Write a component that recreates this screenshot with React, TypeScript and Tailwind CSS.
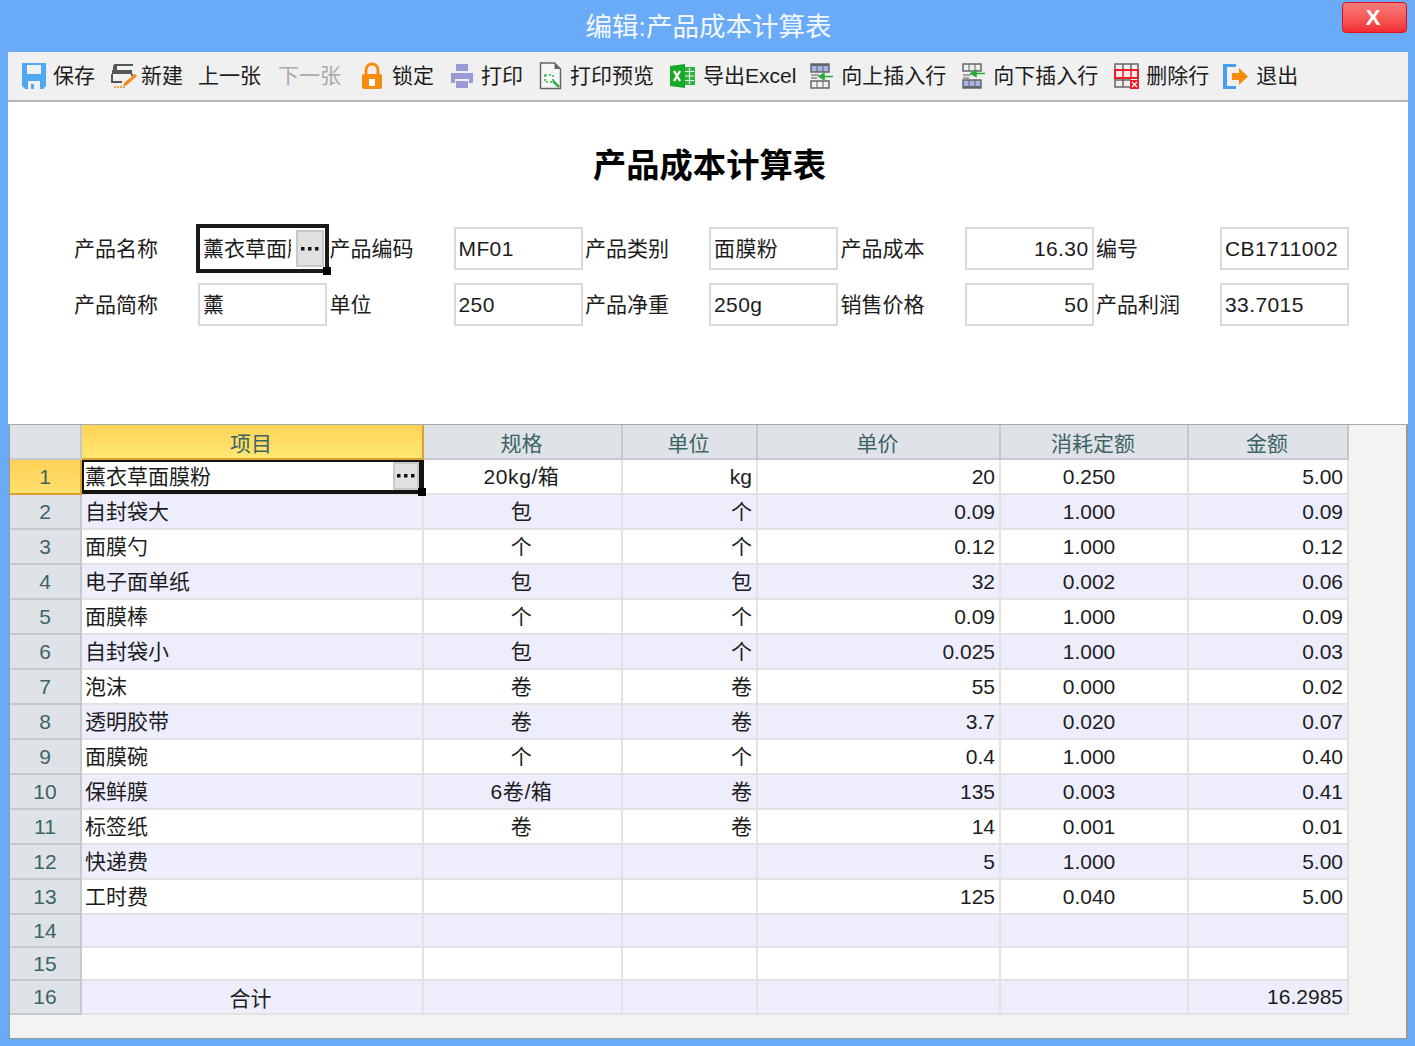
import React from 'react';

const FONT = '"Liberation Sans", "Noto Sans CJK SC", sans-serif';

const SaveIcon = () => (
  <svg width="26" height="28" viewBox="0 0 26 28">
    <path d="M1 1h24v23l-3 3H4l-3-3z" fill="#4fa9f2" />
    <rect x="6" y="3" width="14" height="9" fill="#f0f0f0" />
    <rect x="7" y="19" width="12" height="8" fill="#f0f0f0" />
    <rect x="10" y="22" width="3" height="5" fill="#4fa9f2" />
  </svg>
);

const NewIcon = () => (
  <svg width="28" height="28" viewBox="0 0 28 28">
    <path d="M5 2h18v2H7v4H3V6q0-4 2-4z" fill="#555" />
    <rect x="2" y="8" width="20" height="4" fill="#555" />
    <path d="M2 12v8h10M22 12v2" fill="none" stroke="#555" strokeWidth="2" />
    <path d="M13 24l2-4L25 12l2 2-10 9z" fill="#f08a1c" />
    <path d="M4 25h12" stroke="#f08a1c" strokeWidth="1.5" strokeDasharray="2 1" />
  </svg>
);

const LockIcon = () => (
  <svg width="22" height="28" viewBox="0 0 22 28">
    <path d="M5 13V8a6 6 0 0 1 12 0v5" fill="none" stroke="#f68b0c" strokeWidth="3" />
    <rect x="1" y="12" width="20" height="15" rx="2" fill="#f68b0c" />
    <rect x="8" y="17" width="6" height="7" fill="#fff" />
  </svg>
);

const PrintIcon = () => (
  <svg width="22" height="26" viewBox="0 0 22 26">
    <rect x="5" y="1" width="12" height="7" fill="#9a9ad6" />
    <path d="M0 10h22v10h-4v-4H4v4H0z" fill="#9a9ad6" />
    <rect x="5" y="18" width="12" height="7" fill="#9a9ad6" />
  </svg>
);

const PreviewIcon = () => (
  <svg width="24" height="28" viewBox="0 0 24 28">
    <path d="M1.5 1h14l6 6v19.500h-20z" fill="#f7f7f7" stroke="#666" strokeWidth="1.500" />
    <path d="M15.500 1v6h6z" fill="#666" />
    <rect x="6" y="13" width="8" height="7" fill="none" stroke="#2fae4a" strokeWidth="1.500" strokeDasharray="2 2" />
    <path d="M14 19l6 6" stroke="#2fae4a" strokeWidth="2.500" />
  </svg>
);

const ExcelIcon = () => (
  <svg width="26" height="24" viewBox="0 0 26 24">
    <rect x="14" y="3" width="11" height="18" fill="#2fb33f" />
    <path d="M15 7.500h9M15 12h9M15 16.500h9M19.500 4v16" stroke="#e8f6ea" strokeWidth="1.200" />
    <path d="M0 2l15-2v24L0 22z" fill="#18a828" />
    <path d="M4 7l6 10M10 7l-6 10" stroke="#fff" strokeWidth="2.400" />
  </svg>
);

const InsertUpIcon = () => (
  <svg width="26" height="26" viewBox="0 0 26 26">
    <rect x="1" y="1" width="18" height="8" fill="#a8b4e8" stroke="#666" strokeWidth="1.500" />
    <rect x="1" y="1" width="18" height="2" fill="#666" />
    <path d="M7 3v6M13 3v6" stroke="#666" />
    <rect x="1" y="18" width="18" height="7" fill="#f0f0f0" stroke="#666" strokeWidth="1.500" />
    <path d="M7 18v7M13 18v7" stroke="#666" />
    <path d="M1 12h8M1 15h6" stroke="#888" strokeWidth="1.500" />
    <path d="M13 13.500h10M9 13.500l5-3v6z" stroke="#2aa83a" strokeWidth="1.500" fill="#2aa83a" />
  </svg>
);

const InsertDownIcon = () => (
  <svg width="26" height="26" viewBox="0 0 26 26">
    <rect x="1" y="1" width="18" height="7" fill="#f0f0f0" stroke="#666" strokeWidth="1.500" />
    <path d="M7 1v7M13 1v7" stroke="#666" />
    <path d="M1 12h8M1 15h6" stroke="#888" strokeWidth="1.500" />
    <path d="M13 10.500h10M9 10.500l5-3v6z" stroke="#2aa83a" strokeWidth="1.500" fill="#2aa83a" />
    <rect x="1" y="17" width="18" height="8" fill="#a8b4e8" stroke="#666" strokeWidth="1.500" />
    <rect x="1" y="23" width="18" height="2" fill="#666" />
    <path d="M7 17v6M13 17v6" stroke="#666" />
  </svg>
);

const DeleteIcon = () => (
  <svg width="26" height="26" viewBox="0 0 26 26">
    <rect x="1" y="1" width="23" height="23" fill="#f0f0f0" stroke="#666" strokeWidth="1.500" />
    <path d="M9 1v23M17 1v14M1 17h16" stroke="#666" strokeWidth="1.500" />
    <rect x="1" y="7" width="23" height="8" fill="#fbe8e8" stroke="#ee1c25" strokeWidth="2" />
    <path d="M9 7v8M17 7v8" stroke="#ee1c25" strokeWidth="1.500" />
    <rect x="16" y="17" width="9" height="9" fill="#ee1c25" />
    <path d="M18 19l5 5M23 19l-5 5" stroke="#fff" strokeWidth="1.200" />
  </svg>
);

const ExitIcon = () => (
  <svg width="27" height="27" viewBox="0 0 27 27">
    <path d="M1 1h13v3H5v19h9v3H1z" fill="#4a9cee" />
    <path d="M10 10h7V5l9 8.500-9 8.500v-5h-7z" fill="#f68b0c" />
  </svg>
);

type ToolItem = { icon?: React.ReactNode; label: string; disabled?: boolean; iconGap?: string; offset?: string };

const tools: ToolItem[] = [
  { icon: <SaveIcon />, label: '保存', iconGap: 'mr-[6px]' },
  { icon: <NewIcon />, label: '新建', iconGap: 'mr-[3px]' },
  { label: '上一张' },
  { label: '下一张', disabled: true, offset: 'ml-[2px]' },
  { icon: <LockIcon />, label: '锁定', iconGap: 'ml-[3px] mr-[9px]', offset: 'ml-[2px]' },
  { icon: <PrintIcon />, label: '打印', iconGap: 'mr-[8px]', offset: 'ml-[2px]' },
  { icon: <PreviewIcon />, label: '打印预览', iconGap: 'mr-[7px]', offset: 'ml-[1px]' },
  { icon: <ExcelIcon />, label: '导出Excel', iconGap: 'mr-[7px]', offset: 'ml-[1px]' },
  { icon: <InsertUpIcon />, label: '向上插入行', iconGap: 'mr-[5px]', offset: '-ml-[1px]' },
  { icon: <InsertDownIcon />, label: '向下插入行', iconGap: 'mr-[5px]', offset: 'ml-[1px]' },
  { icon: <DeleteIcon />, label: '删除行', iconGap: 'mr-[6px]', offset: 'ml-[1px]' },
  { icon: <ExitIcon />, label: '退出', iconGap: 'mr-[7px]', offset: '-ml-[2px]' },
];

const Toolbar = () => (
  <div className="flex h-[50px] items-center gap-[15px] border-b-2 border-[#b4b4b4] bg-[#f0f0f0] pl-[13px] text-[21px] text-[#1c1c1c]">
    {tools.map((t) => (
      <div key={t.label} className={`flex items-center whitespace-nowrap ${t.offset ?? ''} ${t.disabled ? 'text-[#a9a9a9]' : ''}`}>
        {t.icon && <span className={`flex shrink-0 ${t.iconGap}`}>{t.icon}</span>}
        {t.label}
      </div>
    ))}
  </div>
);

const DotsButton = ({ className }: { className: string }) => (
  <div className={`absolute z-10 flex items-center justify-center border-2 border-[#c9c9c9] bg-[#e0e0e0] ${className}`}>
    <svg width="18" height="4" viewBox="0 0 18 4">
      <rect x="0" y="0" width="3.500" height="3.500" fill="#111" />
      <rect x="7" y="0" width="3.500" height="3.500" fill="#111" />
      <rect x="14" y="0" width="3.500" height="3.500" fill="#111" />
    </svg>
  </div>
);

const Field = ({ label, value, right }: { label: string; value: string; right?: boolean }) => (
  <div className="flex w-[255.500px] items-center">
    <div className="w-[124px] shrink-0 whitespace-nowrap text-[#1c1c1c]">{label}</div>
    <div className={`flex h-[43px] w-[129px] shrink-0 items-center border-2 border-[#d9d9d9] bg-white px-[3px] tracking-[0.4px] text-[#1c1c1c] ${right ? 'justify-end' : ''}`}>
      {value}
    </div>
  </div>
);

const ActiveField = ({ label, value }: { label: string; value: string }) => (
  <div className="flex w-[255.500px] items-center">
    <div className="w-[124px] shrink-0 whitespace-nowrap text-[#1c1c1c]">{label}</div>
    <div className="relative flex h-[43px] w-[129px] shrink-0 items-center bg-white pl-[5px] text-[#1c1c1c]">
      <span className="block w-[88px] overflow-hidden whitespace-nowrap">{value}</span>
      <div className="absolute -inset-x-[2px] -inset-y-[3px] border-[4px] border-[#1a1a1a]" />
      <DotsButton className="right-[3px] top-[3px] h-[37px] w-[28px]" />
      <div className="absolute -right-[4px] -bottom-[5px] z-10 h-[8px] w-[8px] bg-black" />
    </div>
  </div>
);

const FormPanel = () => (
  <div className="h-[322px] bg-white text-[21px]">
    <h1 className="pt-[42px] pl-[3px] text-center text-[33.300px] leading-[44px] font-bold text-black">产品成本计算表</h1>
    <div className="mt-[39px] pl-[66px]">
      <div className="flex">
        <ActiveField label="产品名称" value="薰衣草面膜粉" />
        <Field label="产品编码" value="MF01" />
        <Field label="产品类别" value="面膜粉" />
        <Field label="产品成本" value="16.30" right />
        <Field label="编号" value="CB1711002" />
      </div>
      <div className="mt-[13px] flex">
        <Field label="产品简称" value="薰" />
        <Field label="单位" value="250" />
        <Field label="产品净重" value="250g" />
        <Field label="销售价格" value="50" right />
        <Field label="产品利润" value="33.7015" />
      </div>
    </div>
  </div>
);

const rows = [
  ['薰衣草面膜粉', '20kg/箱', 'kg', '20', '0.250', '5.00'],
  ['自封袋大', '包', '个', '0.09', '1.000', '0.09'],
  ['面膜勺', '个', '个', '0.12', '1.000', '0.12'],
  ['电子面单纸', '包', '包', '32', '0.002', '0.06'],
  ['面膜棒', '个', '个', '0.09', '1.000', '0.09'],
  ['自封袋小', '包', '个', '0.025', '1.000', '0.03'],
  ['泡沫', '卷', '卷', '55', '0.000', '0.02'],
  ['透明胶带', '卷', '卷', '3.7', '0.020', '0.07'],
  ['面膜碗', '个', '个', '0.4', '1.000', '0.40'],
  ['保鲜膜', '6卷/箱', '卷', '135', '0.003', '0.41'],
  ['标签纸', '卷', '卷', '14', '0.001', '0.01'],
  ['快递费', '', '', '5', '1.000', '5.00'],
  ['工时费', '', '', '125', '0.040', '5.00'],
  ['', '', '', '', '', ''],
  ['', '', '', '', '', ''],
  ['合计', '', '', '', '', '16.2985'],
];

const headers = ['项目', '规格', '单位', '单价', '消耗定额', '金额'];
const widths = ['w-[342px]', 'w-[199px]', 'w-[135px]', 'w-[243px]', 'w-[188px]', 'w-[160px]'];
const aligns = [
  'justify-start pl-[3px]',
  'justify-center pr-[2px] tracking-[0.6px]',
  'justify-end pr-[4px]',
  'justify-end pr-[4px]',
  'justify-center pr-[10px]',
  'justify-end pr-[4px]',
];

const DataGrid = () => (
  <div className="ml-[1px] h-[615px] border-y border-l border-r-2 border-t-[#aaaaaa] border-r-[#999999] border-b-[#999999] border-l-[#999999] bg-[#f3f3f3] text-[21px]">
    <div className="flex h-[35px] text-[#3c6464]">
      <div className="w-[72px] border-r-2 border-b-2 border-[#c5c8cc] bg-[#dfe2e7]" />
      {headers.map((h, i) => (
        <div
          key={h}
          className={`${widths[i]} flex items-center justify-center border-r-2 border-b-2 pt-[5px] pr-[2px] ${
            i === 0
              ? 'border-[#e0a030] bg-gradient-to-b from-[#ffd257] to-[#ffe873]'
              : 'border-[#c5c8cc] bg-[#dfe2e7]'
          }`}
        >
          {h}
        </div>
      ))}
    </div>
    {rows.map((row, r) => {
      const height = r < 13 ? 'h-[35px]' : r === 15 ? 'h-[34px]' : 'h-[33px]';
      return (
        <div key={r} className={`flex ${height}`}>
          <div
            className={`flex w-[72px] items-center justify-center border-r-2 border-b-2 text-[#3c6464] ${
              r === 0
                ? 'border-[#e0a030] bg-gradient-to-b from-[#ffd257] to-[#ffdf6b]'
                : 'border-[#c5c8cc] bg-[#dfe2e7]'
            }`}
          >
            {r + 1}
          </div>
          {row.map((cell, c) => (
            <div
              key={c}
              className={`${widths[c]} relative flex items-center border-r-2 border-b-2 border-[#e2e2e2] whitespace-nowrap text-[#1c1c1c] ${aligns[c]} ${
                r % 2 === 1 || r === 15 ? 'bg-[#ededfc]' : 'bg-white'
              }`}
            >
              {r === 15 && c === 0 ? <span className="w-full pt-[3px] pr-[6px] text-center">{cell}</span> : cell}
              {r === 0 && c === 0 && (
                <>
                  <div className="absolute inset-x-0 -right-[2px] top-0 -bottom-[1px] z-10 border-t-2 border-r-[5px] border-b-[4px] border-l-2 border-[#141414]" />
                  <DotsButton className="top-[2px] right-[3px] h-[28px] w-[26px]" />
                  <div className="absolute -right-[4px] -bottom-[3px] z-10 h-[8px] w-[8px] bg-black" />
                </>
              )}
            </div>
          ))}
        </div>
      );
    })}
  </div>
);

export default function App() {
  return (
    <div className="h-[1046px] w-[1415px] overflow-hidden bg-[#6aabf7]" style={{ fontFamily: FONT }}>
      <div className="relative flex h-[52px] items-center justify-center pt-[3px] pl-[2px] text-[26.500px] text-[#f2f7ff]">
        编辑:产品成本计算表
        <div className="absolute top-[2px] right-[8px] flex h-[31px] w-[65px] items-center justify-center rounded-[4px] border border-[#e0101c] bg-gradient-to-b from-[#f97c7c] to-[#f22a30] pr-[3px] text-[22px] font-bold text-white">
          X
        </div>
      </div>
      <div className="mr-[7px] ml-[8px]">
        <Toolbar />
        <FormPanel />
        <DataGrid />
      </div>
    </div>
  );
}
